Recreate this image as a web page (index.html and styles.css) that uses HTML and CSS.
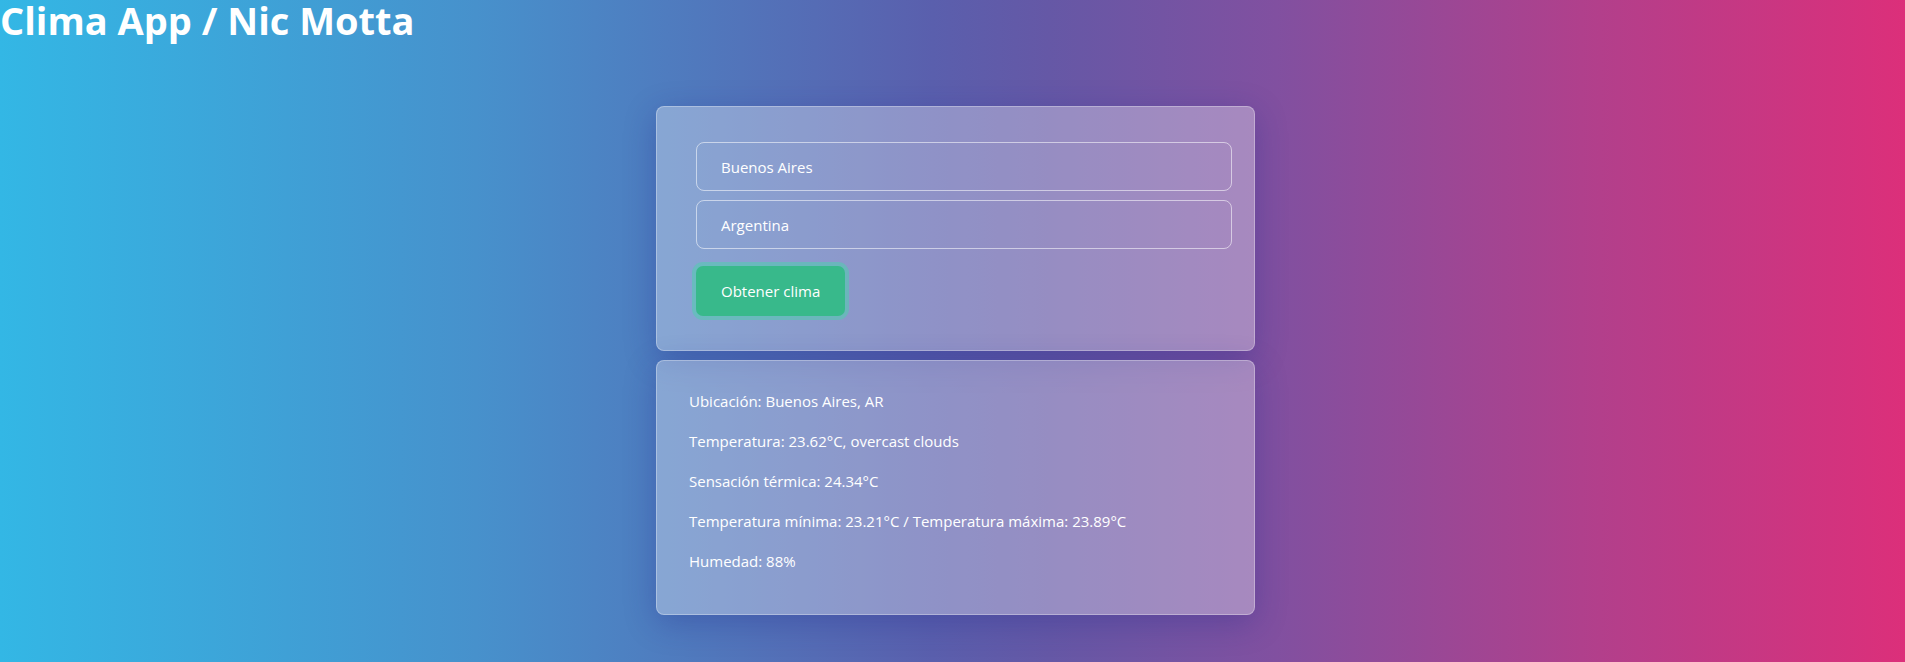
FILE: index.html
```html
<!DOCTYPE html>
<html lang="es">
<head>
<meta charset="utf-8">
<title>Clima App</title>
<link rel="stylesheet" href="styles.css">
</head>
<body>
<h1 class="title">Clima App / Nic Motta</h1>
<main class="wrap">
  <form class="card form-card">
    <input class="field" type="text" value="Buenos Aires">
    <input class="field" type="text" value="Argentina">
    <button class="btn" type="button">Obtener clima</button>
  </form>
  <section class="card result-card">
    <p>Ubicación: Buenos Aires, AR</p>
    <p>Temperatura: 23.62°C, overcast clouds</p>
    <p>Sensación térmica: 24.34°C</p>
    <p>Temperatura mínima: 23.21°C / Temperatura máxima: 23.89°C</p>
    <p>Humedad: 88%</p>
  </section>
</main>
</body>
</html>
```
FILE: styles.css
```css
* { box-sizing: border-box; }
html, body { height: 100%; }
body {
  margin: 0;
  min-height: 662px;
  overflow: hidden;
  font-family: "Open Sans", "Noto Sans", sans-serif;
  color: #fff;
  background: linear-gradient(90deg, #33b7e5 0%, #4791cc 25%, #5a5fad 49%, #6558a6 55%, #8150a0 67%, #b0408c 83%, #dc2f7a 100%);
}
.title {
  margin: 0;
  padding: 0;
  font-size: 38px;
  line-height: 40px;
  font-weight: 700;
}
.wrap {
  display: flex;
  flex-direction: column;
  align-items: center;
  gap: 9px;
  padding-left: 6px;
  margin-top: 66px;
}
.card {
  width: 599px;
  background: rgba(255, 255, 255, 0.32);
  border: 1px solid rgba(255, 255, 255, 0.3);
  border-radius: 8px;
  box-shadow: 0 8px 32px rgba(31, 38, 135, 0.3);
}
.form-card {
  display: flex;
  flex-direction: column;
  align-items: flex-start;
  padding: 35px 22px 34px 39px;
  margin: 0;
}
.field {
  width: 536px;
  height: 49px;
  margin: 0 0 9px;
  padding: 0 24px;
  border: 1px solid rgba(255, 255, 255, 0.55);
  border-radius: 8px;
  background: transparent;
  color: #fff;
  font-family: inherit;
  font-size: 15px;
  outline: none;
}
.field:last-of-type { margin-bottom: 17px; }
.btn {
  height: 50px;
  padding: 0 25px;
  border: none;
  border-radius: 7px;
  background: #38b98b;
  color: #fff;
  font-family: inherit;
  font-size: 15px;
  box-shadow: 0 0 0 4px rgba(80, 205, 175, 0.55);
}
.result-card {
  padding: 28px 32px 25px;
}
.result-card p {
  margin: 0 0 16px;
  font-size: 15px;
  line-height: 24px;
}
```
